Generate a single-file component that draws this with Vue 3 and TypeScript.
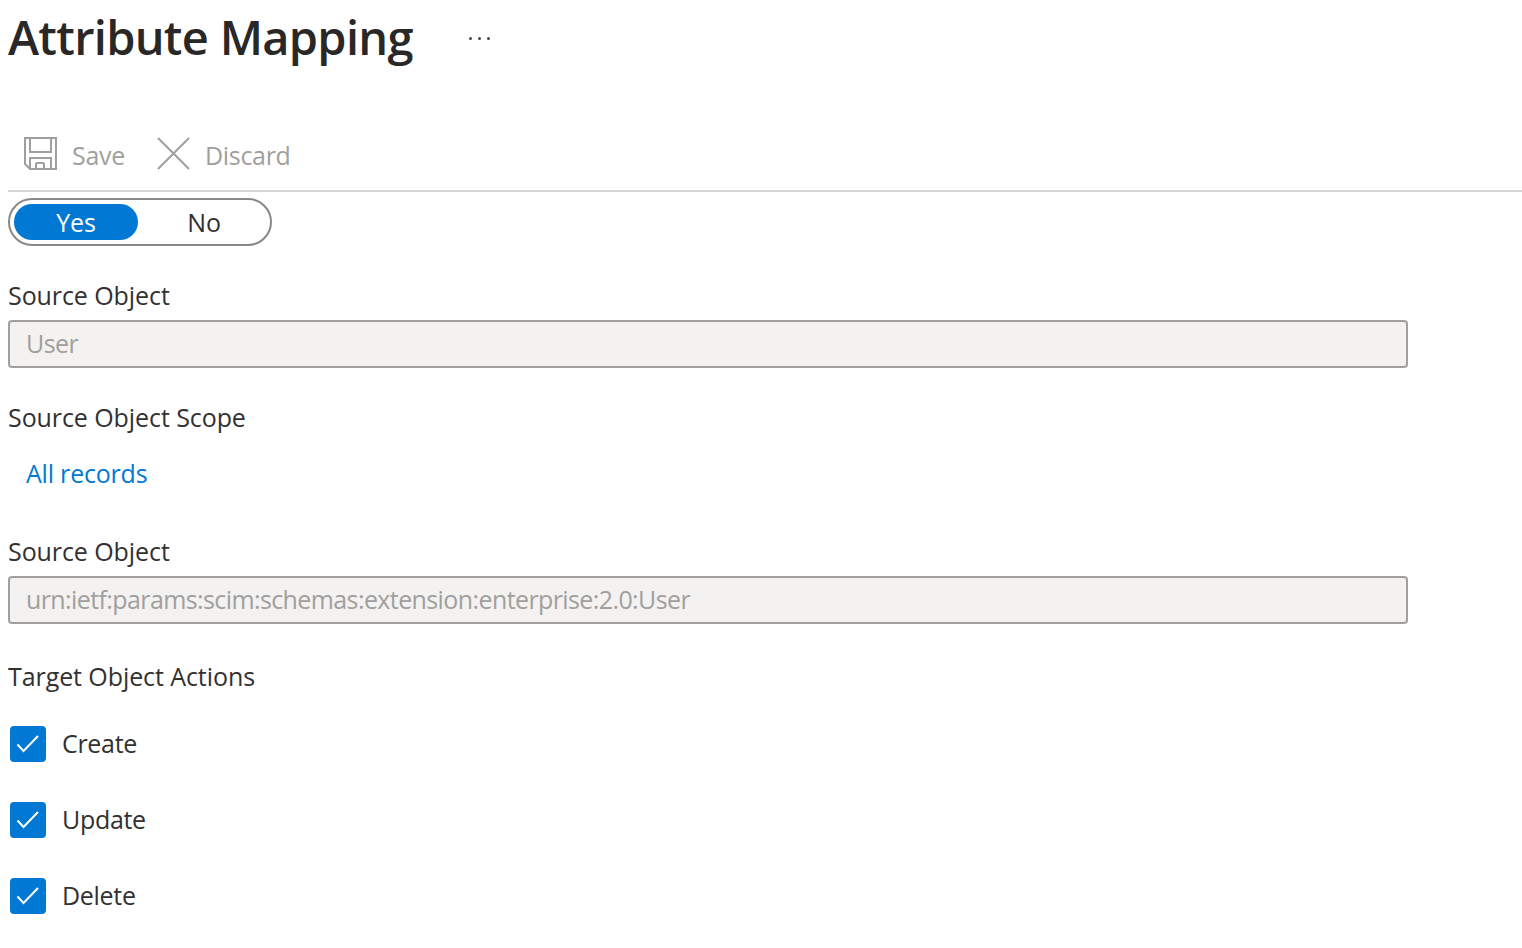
<script setup lang="ts">
const actions: string[] = ['Create', 'Update', 'Delete']
</script>

<template>
  <main class="page">
    <header class="title-row">
      <h1>Attribute Mapping</h1>
      <span class="more">
        <i></i><i></i><i></i>
      </span>
    </header>

    <div class="toolbar">
      <button class="tool save">
        <svg width="34" height="34" viewBox="0 0 34 34" fill="none" stroke="#a19f9d" stroke-width="2">
          <path d="M1 1h31v31H6l-5-5z" />
          <path d="M6 1v14h21V1" />
          <path d="M6 32V21h21v11" />
          <path d="M12 26v6" />
          <path d="M20 26v6" />
          <path d="M12 26h8" />
        </svg>
        <span>Save</span>
      </button>
      <button class="tool discard">
        <svg width="34" height="34" viewBox="0 0 34 34" fill="none" stroke="#a19f9d" stroke-width="2">
          <path d="M1 1l31 31M32 1L1 32" />
        </svg>
        <span>Discard</span>
      </button>
    </div>

    <div class="toggle">
      <span class="opt on">Yes</span>
      <span class="opt">No</span>
    </div>

    <label class="label first">Source Object</label>
    <div class="input">User</div>

    <label class="label second">Source Object Scope</label>
    <a class="link">All records</a>

    <label class="label third">Source Object</label>
    <div class="input">urn:ietf:params:scim:schemas:extension:enterprise:2.0:User</div>

    <label class="label fourth">Target Object Actions</label>
    <ul class="checks">
      <li v-for="a in actions" :key="a">
        <span class="box">
          <svg width="36" height="36" viewBox="0 0 36 36" fill="none" stroke="#fff" stroke-width="2">
            <path d="M7.5 18.5l6 6.5L28 10" />
          </svg>
        </span>
        <span class="check-text">{{ a }}</span>
      </li>
    </ul>
  </main>
</template>

<style>
html, body { margin: 0; background: #fff; }
</style>

<style scoped>
.page {
  height: 948px;
  box-sizing: border-box;
  overflow: hidden;
  padding-left: 8px;
  font-family: "Open Sans", "Noto Sans", sans-serif;
  font-size: 25px;
  letter-spacing: -0.08px;
  color: #323130;
}
.title-row {
  display: flex;
  align-items: center;
  height: 76px;
}
h1 {
  margin: 0;
  font-size: 47px;
  line-height: 74px;
  height: 76px;
  font-weight: 600;
  letter-spacing: -0.7px;
  color: #292827;
}
.more {
  display: flex;
  gap: 6px;
  margin-left: 56px;
}
.more i {
  width: 3px;
  height: 3px;
  border-radius: 50%;
  background: #484644;
}
.toolbar {
  display: flex;
  align-items: center;
  margin-top: 50px;
  height: 56px;
  border-bottom: 2px solid #d6d6d6;
  padding-bottom: 8px;
  padding-left: 16px;
  gap: 32px;
}
.tool {
  display: flex;
  align-items: center;
  gap: 14px;
  padding: 0;
  border: 0;
  background: none;
  font: inherit;
  letter-spacing: -0.3px;
  color: #a19f9d;
}
.tool span { position: relative; top: 1px; }
.toggle {
  display: flex;
  box-sizing: border-box;
  width: 264px;
  height: 48px;
  margin-top: 6px;
  padding: 4px 0 4px 4px;
  border: 2px solid #8a8886;
  border-radius: 24px;
}
.opt {
  flex: none;
  width: 124px;
  height: 36px;
  line-height: 36px;
  text-align: center;
  border-radius: 18px;
}
.opt + .opt { width: 132px; }
.on {
  background: #0078d4;
  color: #fff;
}
.label {
  display: block;
  height: 36px;
  line-height: 34px;
}
.first { margin-top: 32px; }
.second { margin-top: 32px; }
.third { margin-top: 42px; }
.fourth { margin-top: 35px; }
.input {
  box-sizing: border-box;
  width: 1400px;
  height: 48px;
  margin-top: 6px;
  padding-left: 16px;
  line-height: 42px;
  letter-spacing: -0.6px;
  background: #f3f2f1;
  border: 2px solid #a19f9d;
  border-radius: 4px;
  color: #a19f9d;
}
.link {
  display: block;
  height: 36px;
  margin: 20px 0 0 18px;
  line-height: 34px;
  letter-spacing: -0.2px;
  color: #0078d4;
}
.checks {
  list-style: none;
  margin: 31px 0 0 2px;
  padding: 0;
  display: flex;
  flex-direction: column;
  gap: 40px;
}
.checks li {
  display: flex;
  align-items: center;
  gap: 16px;
  height: 36px;
}
.check-text {
  line-height: 34px;
  height: 36px;
  letter-spacing: -0.3px;
}
.box {
  width: 36px;
  height: 36px;
  display: block;
  border-radius: 4px;
  background: #0078d4;
}
.box svg { display: block; }
</style>
